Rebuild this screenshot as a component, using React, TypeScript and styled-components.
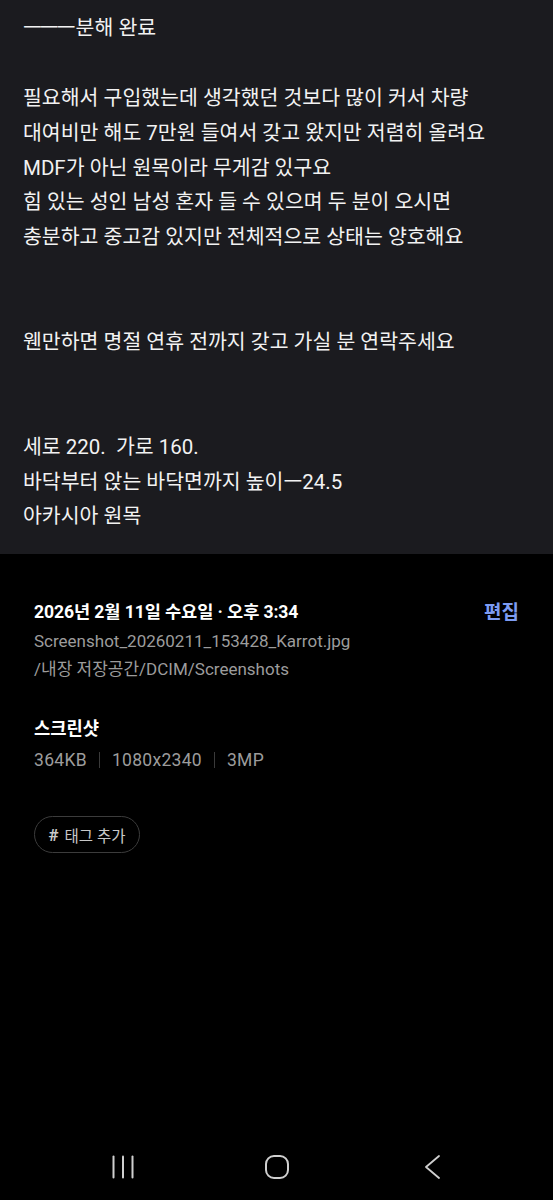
import React from "react";
import styled, { createGlobalStyle } from "styled-components";

const Global = createGlobalStyle`
  html, body { margin: 0; padding: 0; background: #000; }
  body { font-family: "Roboto", "Noto Sans CJK KR", sans-serif; }
  * { box-sizing: border-box; }
`;

const Page = styled.div`
  width: 553px;
  height: 1200px;
  display: flex;
  flex-direction: column;
  background: #000;
  overflow: hidden;
`;

const Preview = styled.div`
  height: 554px;
  flex-shrink: 0;
  background: #1b1b1f;
  padding: 11px 23px 0 23px;
  color: #f2f2f2;
  font-size: 20.5px;
  line-height: 34.9px;
  white-space: pre-wrap;
`;

const Line = styled.div`
  height: 34.9px;
`;

const Dashes = styled.span`
  letter-spacing: -2px;
  margin-right: 2px;
`;

const Info = styled.div`
  flex: 1;
  display: flex;
  flex-direction: column;
  padding: 42px 34px 0 34px;
`;

const TopRow = styled.div`
  display: flex;
  justify-content: space-between;
  align-items: center;
  height: 28px;
`;

const DateText = styled.div`
  color: #ffffff;
  font-size: 17.6px;
  font-weight: 700;
  letter-spacing: -0.1px;
`;

const EditLink = styled.div`
  color: #7d9cf2;
  font-size: 19px;
  font-weight: 700;
`;

const Sub = styled.div<{ $top: number }>`
  color: #9c9c9c;
  font-size: 17px;
  line-height: 28px;
  margin-top: ${(p) => p.$top}px;
`;

const Section = styled.div`
  margin-top: 32px;
`;

const Title = styled.div`
  color: #ffffff;
  font-size: 17.7px;
  font-weight: 700;
  line-height: 28px;
`;

const MetaRow = styled.div`
  display: flex;
  align-items: center;
  gap: 12px;
  color: #9c9c9c;
  font-size: 17.5px;
  letter-spacing: 0.3px;
  line-height: 30px;
  margin-top: 2px;
`;

const Sep = styled.span`
  width: 1px;
  height: 16px;
  background: #3a3a3a;
`;

const TagButton = styled.div`
  margin-top: 41px;
  width: 106px;
  height: 37px;
  border: 1px solid #3c3c3c;
  border-radius: 19px;
  display: flex;
  align-items: center;
  justify-content: center;
  gap: 6px;
  color: #c8c8c8;
  font-size: 15.5px;
`;

const Hash = styled.span`
  font-weight: 700;
  font-size: 17px;
`;

const NavBar = styled.div`
  height: 56px;
  flex-shrink: 0;
  display: flex;
  align-items: flex-start;
  padding: 11px 112px 0 112px;
  justify-content: space-between;
`;

const NavIcon = styled.div`
  width: 24px;
  height: 24px;
  display: flex;
`;

const lines = [
  "",
  "",
  "필요해서 구입했는데 생각했던 것보다 많이 커서 차량",
  "대여비만 해도 7만원 들여서 갖고 왔지만 저렴히 올려요",
  "MDF가 아닌 원목이라 무게감 있구요",
  "힘 있는 성인 남성 혼자 들 수 있으며 두 분이 오시면",
  "충분하고 중고감 있지만 전체적으로 상태는 양호해요",
  "",
  "",
  "웬만하면 명절 연휴 전까지 갖고 가실 분 연락주세요",
  "",
  "",
  "세로 220.  가로 160.",
  "바닥부터 앉는 바닥면까지 높이ㅡ24.5",
  "아카시아 원목",
];

export default function App() {
  return (
    <Page>
      <Global />
      <Preview>
        {lines.map((l, i) =>
          i === 0 ? (
            <Line key={i}>
              <Dashes>ㅡㅡㅡ</Dashes>분해 완료
            </Line>
          ) : (
            <Line key={i}>{l}</Line>
          )
        )}
      </Preview>
      <Info>
        <TopRow>
          <DateText>2026년 2월 11일 수요일 · 오후 3:34</DateText>
          <EditLink>편집</EditLink>
        </TopRow>
        <Sub $top={3}>Screenshot_20260211_153428_Karrot.jpg</Sub>
        <Sub $top={0}>/내장 저장공간/DCIM/Screenshots</Sub>
        <Section>
          <Title>스크린샷</Title>
          <MetaRow>
            <span>364KB</span>
            <Sep />
            <span>1080x2340</span>
            <Sep />
            <span>3MP</span>
          </MetaRow>
        </Section>
        <TagButton>
          <Hash>#</Hash>
          <span>태그 추가</span>
        </TagButton>
      </Info>
      <NavBar>
        <NavIcon>
          <svg width="24" height="24" viewBox="0 0 24 24">
            <g stroke="#cfcfcf" strokeWidth="2" strokeLinecap="round">
              <line x1="1.5" y1="1.5" x2="1.5" y2="22.5" />
              <line x1="11" y1="1.5" x2="11" y2="22.5" />
              <line x1="20.5" y1="1.5" x2="20.5" y2="22.5" />
            </g>
          </svg>
        </NavIcon>
        <NavIcon>
          <svg width="24" height="24" viewBox="0 0 24 24">
            <rect x="1" y="1" width="22" height="22" rx="8" fill="none" stroke="#cfcfcf" strokeWidth="2" />
          </svg>
        </NavIcon>
        <NavIcon>
          <svg width="24" height="24" viewBox="0 0 24 24">
            <polyline points="22,1 9,12 22,23" fill="none" stroke="#cfcfcf" strokeWidth="1.8" strokeLinecap="round" strokeLinejoin="round" />
          </svg>
        </NavIcon>
      </NavBar>
    </Page>
  );
}
